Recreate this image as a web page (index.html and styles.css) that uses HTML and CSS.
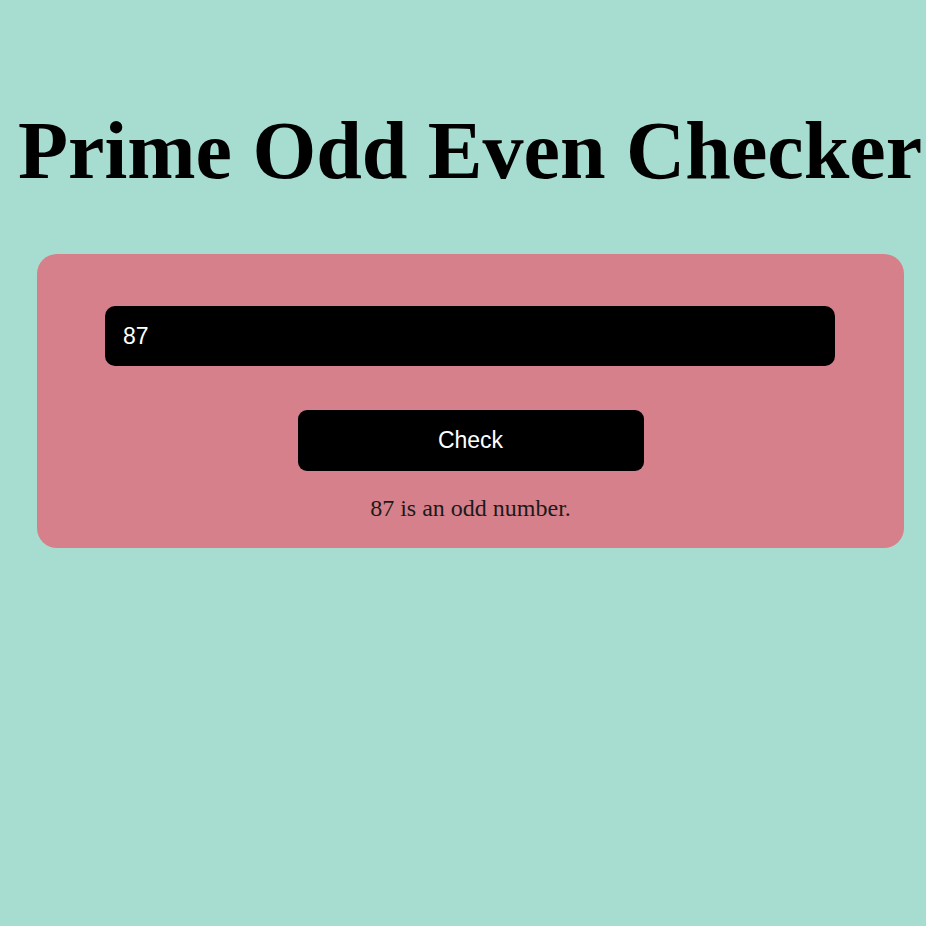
FILE: index.html
```html
<!DOCTYPE html>
<html lang="en">
<head>
<meta charset="utf-8">
<title>Prime Odd Even Checker</title>
<link rel="stylesheet" href="styles.css">
</head>
<body>
<div class="page">
  <h1 class="title">Prime Odd Even Checker</h1>
  <div class="card">
    <input class="number-input" type="text" value="87">
    <button class="check-btn" type="button">Check</button>
    <p class="result">87 is an odd number.</p>
  </div>
</div>
</body>
</html>
```

FILE: styles.css
```css
html, body {
  margin: 0;
  padding: 0;
  background: #a7ddd0;
}
.page {
  padding-left: 14px;
  padding-top: 104px;
  font-family: "Liberation Serif", "Times New Roman", serif;
}
.title {
  margin: 0 0 56px 0;
  text-align: center;
  font-size: 82px;
  font-weight: bold;
  line-height: normal;
  color: #000;
  white-space: nowrap;
}
.card {
  margin: 0 22px 0 23px;
  background: #d6808b;
  border-radius: 20px;
  padding: 52px 0 26px 0;
  display: flex;
  flex-direction: column;
  align-items: center;
}
.number-input {
  box-sizing: border-box;
  width: 730px;
  height: 60px;
  margin: 0 0 44px -1px;
  padding: 0 18px;
  border: none;
  border-radius: 10px;
  background: #000;
  color: #fff;
  font-family: "Liberation Sans", Arial, sans-serif;
  font-size: 23px;
  outline: none;
}
.check-btn {
  box-sizing: border-box;
  width: 346px;
  height: 61px;
  border: none;
  border-radius: 9px;
  background: #000;
  color: #fff;
  font-family: "Liberation Sans", Arial, sans-serif;
  font-size: 23px;
  cursor: pointer;
}
.result {
  margin: 24px 0 0 0;
  font-size: 24px;
  line-height: normal;
  color: #1a1a1a;
}
```
